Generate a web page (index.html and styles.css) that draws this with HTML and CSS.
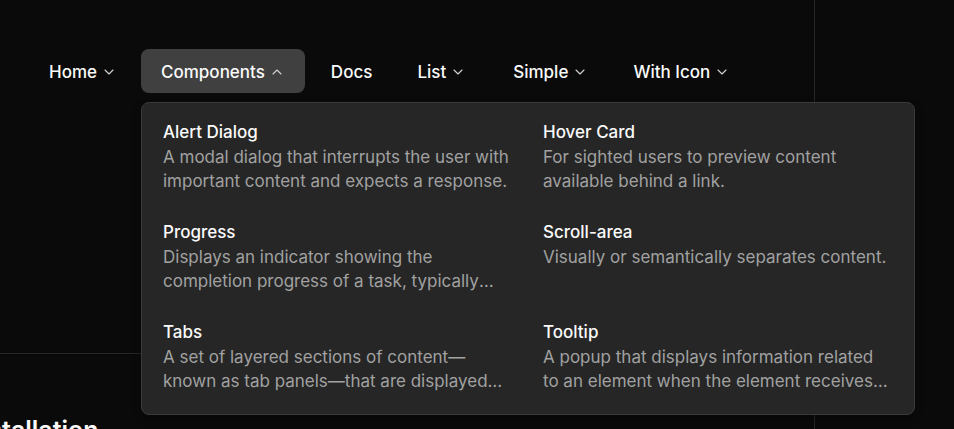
FILE: index.html
```html
<!DOCTYPE html>
<html lang="en">
<head>
<meta charset="utf-8">
<title>Navigation Menu</title>
<link rel="stylesheet" href="styles.css">
</head>
<body>
<div class="page">
  <div class="main">
    <div class="preview">
      <nav class="nav">
        <button class="trigger">Home <svg class="chev" viewBox="0 0 24 24"><path d="m6 9 6 6 6-6"/></svg></button>
        <button class="trigger open">Components <svg class="chev" viewBox="0 0 24 24"><path d="m18 15-6-6-6 6"/></svg></button>
        <a class="trigger link">Docs</a>
        <button class="trigger list">List <svg class="chev" viewBox="0 0 24 24"><path d="m6 9 6 6 6-6"/></svg></button>
        <button class="trigger wide">Simple <svg class="chev" viewBox="0 0 24 24"><path d="m6 9 6 6 6-6"/></svg></button>
        <button class="trigger icon">With Icon <svg class="chev" viewBox="0 0 24 24"><path d="m6 9 6 6 6-6"/></svg></button>
      </nav>
      <div class="dropdown">
        <ul class="grid">
          <li class="item">
            <div class="title">Alert Dialog</div>
            <p class="desc">A modal dialog that interrupts the user with important content and expects a response.</p>
          </li>
          <li class="item">
            <div class="title">Hover Card</div>
            <p class="desc">For sighted users to preview content available behind a link.</p>
          </li>
          <li class="item">
            <div class="title">Progress</div>
            <p class="desc">Displays an indicator showing the completion progress of a task, typically displayed as a progress bar.</p>
          </li>
          <li class="item">
            <div class="title">Scroll-area</div>
            <p class="desc">Visually or semantically separates content.</p>
          </li>
          <li class="item">
            <div class="title">Tabs</div>
            <p class="desc">A set of layered sections of content—known as tab panels—that are displayed one at a time.</p>
          </li>
          <li class="item">
            <div class="title">Tooltip</div>
            <p class="desc">A popup that displays information related to an element when the element receives keyboard focus or the mouse hovers over it.</p>
          </li>
        </ul>
      </div>
    </div>
    <div class="section">
      <h2 class="heading">Installation</h2>
    </div>
  </div>
</div>
</body>
</html>
```

FILE: styles.css
```css
* { box-sizing: border-box; }
html, body {
  margin: 0;
  padding: 0;
  background: #0a0a0a;
  color: #fafafa;
  font-family: Inter, "Noto Sans", sans-serif;
  overflow: hidden;
}
.page {
  display: flex;
  height: 429px;
}
.main {
  width: 815px;
  border-right: 1px solid #262626;
  flex: none;
}
.preview {
  position: relative;
  height: 354px;
  border-bottom: 1px solid #262626;
}
.nav {
  display: flex;
  align-items: center;
  gap: 4px;
  padding: 49px 0 0 29px;
}
.trigger {
  display: inline-flex;
  align-items: center;
  gap: 4px;
  height: 44px;
  padding: 2px 20px 0;
  border: 0;
  border-radius: 8px;
  background: transparent;
  color: #fafafa;
  font-family: inherit;
  font-size: 17px;
  font-weight: 500;
  line-height: 1;
  cursor: pointer;
  text-decoration: none;
}
.trigger.open { background: #404040; }
.trigger.link { margin-left: 2px; }
.trigger.list { margin-left: 1px; }
.trigger.wide { margin-left: 3px; }
.trigger.icon { margin-left: 1px; }
.chev {
  width: 16px;
  height: 16px;
  fill: none;
  stroke: #d4d4d4;
  stroke-width: 1.6;
  stroke-linecap: round;
  stroke-linejoin: round;
}
.dropdown {
  position: absolute;
  left: 141px;
  top: 102px;
  width: 774px;
  background: #262626;
  border: 1px solid #3a3a3a;
  border-radius: 8px;
  box-shadow: 0 4px 10px rgba(0,0,0,0.3);
  z-index: 10;
}
.grid {
  list-style: none;
  margin: 0;
  padding: 9px 11px 9px 9px;
  display: grid;
  grid-template-columns: 372px 372px;
  column-gap: 8px;
  row-gap: 7px;
}
.item {
  padding: 12px;
  border-radius: 6px;
}
.title {
  font-size: 17px;
  font-weight: 500;
  line-height: 17px;
  color: #fafafa;
  margin-bottom: 4px;
}
.desc {
  margin: 0;
  font-size: 17px;
  line-height: 24px;
  color: #a1a1a1;
  display: -webkit-box;
  -webkit-line-clamp: 2;
  -webkit-box-orient: vertical;
  overflow: hidden;
  height: 48px;
}
.section {
  padding-top: 60px;
}
.heading {
  margin: 0 0 0 -34px;
  font-size: 25px;
  line-height: 32px;
  font-weight: 600;
  color: #fafafa;
}
```
